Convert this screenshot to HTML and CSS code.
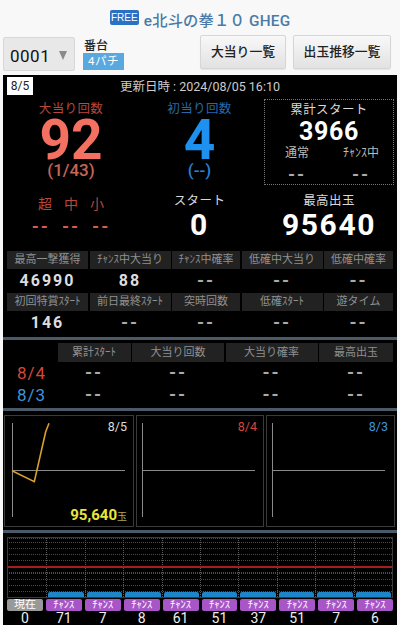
FILE: index.html
```html
<!DOCTYPE html>
<html lang="ja">
<head>
<meta charset="utf-8">
<title>e北斗の拳10 GHEG</title>
<link rel="stylesheet" href="styles.css">
</head>
<body>
<h1 class="title"><span class="free">FREE</span><span>e北斗の拳１０ GHEG</span></h1>
<div class="controls">
  <div class="select"><span>0001</span><i class="arrow"></i></div>
  <div class="machine"><div class="machine-label">番台</div><div class="machine-tag">4パチ</div></div>
  <div class="btn btn-a">大当り一覧</div>
  <div class="btn btn-b">出玉推移一覧</div>
</div>
<main class="panel">
  <div class="update"><span class="date-badge">8/5</span><span>更新日時 : 2024/08/05 16:10</span></div>
  <section class="summary">
    <div class="col">
      <div class="lbl red">大当り回数</div>
      <div class="huge coral">92</div>
      <div class="sub sub-coral">(1/43)</div>
    </div>
    <div class="col">
      <div class="lbl blue">初当り回数</div>
      <div class="huge azure">4</div>
      <div class="sub sub-azure">(--)</div>
    </div>
    <div class="box c3">
      <div class="lbl white">累計スタート</div>
      <div class="big3966">3966</div>
      <div class="box-grid">
        <div>通常</div><div>ﾁｬﾝｽ中</div>
        <div class="dash">--</div><div class="dash">--</div>
      </div>
    </div>
    <div class="col low">
      <div class="trio"><span>超</span><span>中</span><span>小</span></div>
      <div class="trio dashes"><span>--</span><span>--</span><span>--</span></div>
    </div>
    <div class="col low">
      <div class="lbl white">スタート</div>
      <div class="big">0</div>
    </div>
    <div class="col low c3">
      <div class="lbl white">最高出玉</div>
      <div class="big">95640</div>
    </div>
  </section>
  <section class="stats">
    <div class="th">最高一撃獲得</div><div class="th">ﾁｬﾝｽ中大当り</div><div class="th">ﾁｬﾝｽ中確率</div><div class="th">低確中大当り</div><div class="th">低確中確率</div>
    <div class="td">46990</div><div class="td">88</div><div class="td nil">--</div><div class="td nil">--</div><div class="td nil">--</div>
    <div class="th">初回特賞ｽﾀｰﾄ</div><div class="th">前日最終ｽﾀｰﾄ</div><div class="th">突時回数</div><div class="th">低確ｽﾀｰﾄ</div><div class="th">遊タイム</div>
    <div class="td">146</div><div class="td nil">--</div><div class="td nil">--</div><div class="td nil">--</div><div class="td nil">--</div>
  </section>
  <section class="prev">
    <div></div><div class="th">累計ｽﾀｰﾄ</div><div class="th">大当り回数</div><div class="th">大当り確率</div><div class="th">最高出玉</div>
    <div class="day d-red">8/4</div><div class="pv">--</div><div class="pv">--</div><div class="pv">--</div><div class="pv">--</div>
    <div class="day d-blue">8/3</div><div class="pv">--</div><div class="pv">--</div><div class="pv">--</div><div class="pv">--</div>
  </section>
  <section class="graphs">
    <div class="graph">
      <svg viewBox="0 0 128 110" class="graph-svg"><path class="axis" d="M7.500 7V101M7 54.500H120"/><path class="trace" d="M7 54.700L29.300 65.700L40.700 15.700L44 7.300"/></svg>
      <span class="g-date">8/5</span>
      <span class="g-total">95,640<small>玉</small></span>
    </div>
    <div class="graph">
      <svg viewBox="0 0 126 110" class="graph-svg"><path class="axis" d="M5.500 7V101M5 54.500H118"/></svg>
      <span class="g-date d-red">8/4</span>
    </div>
    <div class="graph">
      <svg viewBox="0 0 127 110" class="graph-svg"><path class="axis" d="M5.500 7V101M5 54.500H118"/></svg>
      <span class="g-date d-blue">8/3</span>
    </div>
  </section>
  <section class="history">
    <div class="bars">
      <div class="bar-col"></div>
      <div class="bar-col"><i></i></div><div class="bar-col"><i></i></div><div class="bar-col"><i></i></div>
      <div class="bar-col"><i></i></div><div class="bar-col"><i></i></div><div class="bar-col"><i></i></div>
      <div class="bar-col"><i></i></div><div class="bar-col"><i></i></div><div class="bar-col"><i></i></div>
      <div class="redline"></div>
    </div>
    <div class="tags">
      <div class="tag now">現在</div><div class="tag">ﾁｬﾝｽ</div><div class="tag">ﾁｬﾝｽ</div><div class="tag">ﾁｬﾝｽ</div><div class="tag">ﾁｬﾝｽ</div><div class="tag">ﾁｬﾝｽ</div><div class="tag">ﾁｬﾝｽ</div><div class="tag">ﾁｬﾝｽ</div><div class="tag">ﾁｬﾝｽ</div><div class="tag">ﾁｬﾝｽ</div>
      <div class="num">0</div><div class="num">71</div><div class="num">7</div><div class="num">8</div><div class="num">61</div><div class="num">51</div><div class="num">37</div><div class="num">51</div><div class="num">7</div><div class="num">6</div>
    </div>
  </section>
</main>
</body>
</html>
```

FILE: styles.css
```css
* { box-sizing: border-box; }
html, body { margin: 0; height: 625px; overflow: hidden; }
body {
  background: #f8f8f8;
  color: #fff;
  font-family: Roboto, "Noto Sans CJK JP", sans-serif;
  display: flex;
  flex-direction: column;
}
.title {
  margin: 0;
  height: 37px;
  padding-top: 10px;
  display: flex;
  justify-content: center;
  align-items: flex-start;
  gap: 5px;
  font-size: 15.300px;
  line-height: 22px;
  font-weight: 500;
  color: #4a7ba8;
  letter-spacing: 0.2px;
}
.free {
  width: 29px;
  height: 15px;
  background: #2a70c4;
  color: #fff;
  border-radius: 2px;
  font-size: 10px;
  line-height: 15px;
  text-align: center;
  font-family: "Liberation Sans Narrow", "Liberation Sans", sans-serif;
  letter-spacing: 0;
}
.controls {
  height: 38px;
  padding-left: 3px;
  display: flex;
  align-items: flex-start;
  color: #222;
}
.select {
  width: 72px;
  height: 34px;
  background: #e8e8e8;
  border: 1px solid #d8d8d8;
  border-radius: 2px;
  display: flex;
  align-items: center;
  gap: 9px;
  padding: 3px 0 0 6px;
  font-size: 17px;
  color: #111;
  letter-spacing: 0.5px;
}
.arrow {
  width: 0;
  height: 0;
  border-left: 4.500px solid transparent;
  border-right: 4.500px solid transparent;
  border-top: 9px solid #8a8a8a;
}
.machine { margin-left: 8px; width: 117px; }
.machine-label { font-size: 12px; line-height: 14px; margin-top: 2px; color: #222; font-weight: 500; margin-left: 1px; }
.machine-tag {
  width: 41px;
  height: 17px;
  background: #5aa8e0;
  color: #fff;
  font-size: 11.500px;
  line-height: 17px;
  text-align: center;
  letter-spacing: 0.5px;
}
.btn {
  height: 34px;
  margin-top: -2px;
  background: linear-gradient(#f8f8f8, #e2e2e2);
  border: 1px solid #d6d6d6;
  border-radius: 2px;
  box-shadow: 0 1px 1px rgba(0,0,0,.08);
  color: #222;
  font-size: 12.800px;
  font-weight: 500;
  line-height: 32px;
  text-align: center;
}
.btn-a { width: 86px; margin-right: 7px; }
.btn-b { width: 98px; }

.panel {
  margin: 0 3px;
  height: 550px;
  background: #000;
  display: flex;
  flex-direction: column;
}
.update {
  position: relative;
  height: 24px;
  text-align: center;
  font-size: 12.500px;
  line-height: 23px;
  color: #ccc;
}
.date-badge {
  position: absolute;
  left: 4px;
  top: 2px;
  width: 26px;
  height: 18px;
  background: #fff;
  color: #222;
  font-size: 12px;
  line-height: 18px;
}
.summary {
  height: 151px;
  display: grid;
  grid-template-columns: 136px 121px 1fr;
  grid-template-rows: 87px 64px;
}
.c3 { margin-left: 4px; margin-right: 3px; }
.col { text-align: center; }
.lbl { font-size: 12.500px; line-height: 18px; letter-spacing: 0.4px; padding-top: 1px; }
.red { color: #b8473d; }
.blue { color: #2468b0; }
.white { color: #d8d8d8; }
.coral { color: #f47060; }
.azure { color: #1e90f0; }
.sub-coral { color: #c8645a; }
.sub-azure { color: #2a80d8; }
.huge { font-size: 55px; line-height: 44px; font-weight: 700; }
.sub { font-size: 17px; line-height: 16px; font-weight: 500; }
.box {
  height: 86px;
  border: 1px dotted #777;
  text-align: center;
}
.big3966 { font-size: 25px; font-weight: 700; line-height: 26px; letter-spacing: 0.6px; }
.box-grid {
  display: grid;
  grid-template-columns: 1fr 1fr;
  font-size: 12px;
  line-height: 17px;
  color: #bbb;
}
.dash { font-weight: 700; font-size: 18px; line-height: 26px; color: #aaa; letter-spacing: 2px; }
.low { padding-top: 5px; }
.trio {
  display: flex;
  justify-content: center;
  gap: 12px;
  color: #b8473d;
  font-size: 14px;
  line-height: 20px;
  margin-top: 3px;
}
.dashes { gap: 12px; font-weight: 700; font-size: 18px; color: #d85a50; line-height: 26px; margin-top: 0; letter-spacing: 2px; }
.big { font-size: 30px; line-height: 30px; font-weight: 700; letter-spacing: 1.600px; color: #fff; }
.stats {
  padding: 0 4px;
  margin-top: 1px;
  display: grid;
  grid-template-columns: 81px 81px 68px 81px 1fr;
  grid-template-rows: 18px 24px 18px 24px;
  column-gap: 1.500px;
  border-bottom: 3px solid #4a5a68;
  height: 89px;
}
.th {
  background: #222;
  color: #909090;
  font-size: 11px;
  line-height: 18px;
  text-align: center;
  white-space: nowrap;
  overflow: hidden;
}
.td {
  color: #ddd;
  text-align: center;
  font-size: 16px;
  font-weight: 700;
  letter-spacing: 2px;
  line-height: 24px;
}
.td.nil { color: #aaa; font-size: 18px; }
.prev {
  height: 71px;
  padding: 3px 4px 0 4px;
  display: grid;
  grid-template-columns: 49px 73px 92px 92px 1fr;
  grid-template-rows: 19px 22px 22px;
  column-gap: 1.500px;
  border-bottom: 3px solid #4a5a68;
}
.prev .th { line-height: 19px; }
.day { font-size: 17px; line-height: 22px; text-align: center; letter-spacing: 1px; white-space: nowrap; }
.d-red { color: #d8453c; }
.d-blue { color: #3c96d8; }
.pv { color: #aaa; text-align: center; font-size: 18px; font-weight: 700; line-height: 22px; letter-spacing: 2px; }
.graphs {
  height: 122px;
  padding: 4px 0 0 1px;
  display: grid;
  grid-template-columns: 130px 128px 129px;
  grid-template-rows: 112px;
  column-gap: 2px;
  border-bottom: 3px solid #4a5a68;
}
.graph { position: relative; border: 1px solid #3a3a3a; }
.graph-svg { display: block; width: 100%; height: 100%; }
.axis { stroke: #8a8a8a; stroke-width: 1; fill: none; }
.trace { stroke: #d8a02c; stroke-width: 1.600; fill: none; }
.g-date { position: absolute; top: 3px; right: 6px; font-size: 12.500px; line-height: 16px; color: #ddd; }
.g-date.d-red { color: #d8453c; }
.g-date.d-blue { color: #3c96d8; }
.g-total { position: absolute; right: 6px; bottom: 0; font-size: 15px; line-height: 18px; font-weight: 700; color: #e8e63c; }
.g-total small { font-size: 10px; font-weight: 400; color: #a8a860; }
.history { padding: 4px 4px 0; flex: 1; overflow: hidden; }
.bars {
  position: relative;
  height: 61px;
  display: grid;
  grid-template-columns: repeat(10, 1fr);
  border: 1px solid #3a3a3a;
  background-image:
    repeating-linear-gradient(to right, #000 0, #000 1px, transparent 1px, transparent 2px),
    repeating-linear-gradient(to bottom, #4a4a4a 0, #4a4a4a 1px, transparent 1px, transparent 6.100px);
  background-position: 0 0, 0 4px;
}
.bar-col {
  position: relative;
  border-left: 1px dotted #5a5a5a;
  display: flex;
  align-items: flex-end;
}
.bar-col:first-child { border-left: 0; }
.bar-col i {
  display: block;
  width: 100%;
  height: 5px;
  margin: 0 1px;
  background: #1e86c8;
  border-radius: 2px 2px 0 0;
}
.redline { position: absolute; left: 0; right: 0; top: 28px; height: 2px; background: #a81c1c; }
.tags {
  margin-top: 1px;
  display: grid;
  grid-template-columns: repeat(10, 1fr);
  grid-template-rows: 12px 14px;
  column-gap: 3px;
}
.tag {
  background: #a855c8;
  color: #fff;
  border-radius: 2px;
  font-size: 10.500px;
  line-height: 12px;
  text-align: center;
  white-space: nowrap;
  overflow: hidden;
}
.tag.now { background: #999; font-size: 11px; }
.num { text-align: center; font-size: 14px; line-height: 14px; color: #eee; }
```
